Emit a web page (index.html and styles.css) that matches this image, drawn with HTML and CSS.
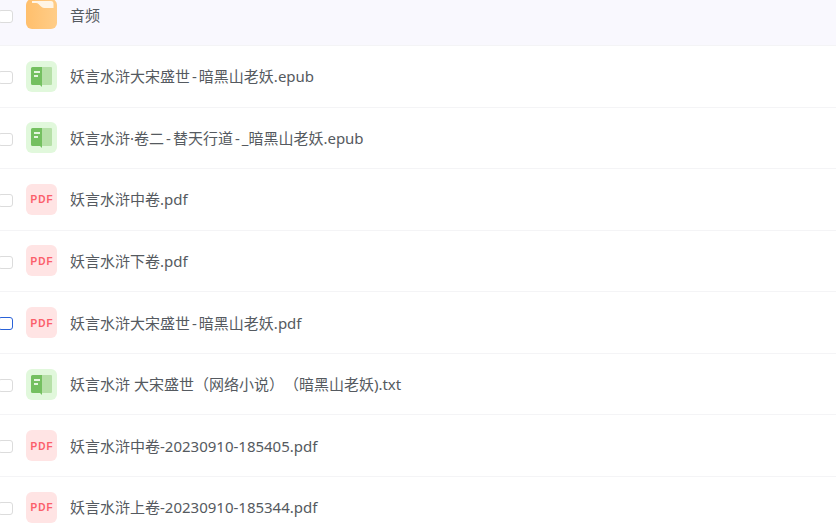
FILE: index.html
```html
<!DOCTYPE html>
<html lang="zh-CN">
<head>
    <meta charset="UTF-8">
    <meta name="viewport" content="width=device-width, initial-scale=1.0">
    <title>文件列表</title>
    <link rel="stylesheet" href="styles.css">
</head>
<body>
    <svg class="sprites" width="0" height="0">
        <defs>
            <linearGradient id="folder-fill" x1="0" y1="0" x2="1" y2="0">
                <stop offset="0" stop-color="#ffbf6c"/>
                <stop offset="1" stop-color="#ffcd88"/>
            </linearGradient>
        </defs>
        <symbol id="icon-folder" viewBox="0 0 31 31">
            <rect x="0" y="0" width="31" height="30" rx="6" fill="url(#folder-fill)"/>
            <path d="M6 2H25Q27.500 2 27.500 5V9H18.500Q17 9 15 7.500L12.500 5Q11.500 4 10 4H6Z" fill="#fff5e6"/>
        </symbol>
        <symbol id="icon-book" viewBox="0 0 31 31">
            <rect width="31" height="31" rx="6" fill="#e1f8dc"/>
            <path d="M16 6H25Q26 6 26 7V23Q26 24 25 24H16Z" fill="#b6e0a8"/>
            <path d="M6.500 6H16V26L14 24H6.500Q5 24 5 22.500V7.500Q5 6 6.500 6Z" fill="#74c060"/>
            <rect x="8" y="10" width="6" height="2" fill="#e6f6e0"/>
            <rect x="8" y="14" width="4" height="2" fill="#e6f6e0"/>
        </symbol>
    </svg>

    <ul class="file-list">
        <li class="file-row selected-row">
            <span class="check"></span>
            <svg class="file-icon"><use href="#icon-folder"/></svg>
            <span class="file-name">音频</span>
        </li>
        <li class="file-row">
            <span class="check"></span>
            <svg class="file-icon"><use href="#icon-book"/></svg>
            <span class="file-name">妖言水浒大宋盛世<span class="dash">-</span>暗黑山老妖.epub</span>
        </li>
        <li class="file-row">
            <span class="check"></span>
            <svg class="file-icon"><use href="#icon-book"/></svg>
            <span class="file-name">妖言水浒·卷二<span class="dash">-</span>替天行道<span class="dash">-</span>_暗黑山老妖.epub</span>
        </li>
        <li class="file-row">
            <span class="check"></span>
            <span class="pdf-icon">PDF</span>
            <span class="file-name">妖言水浒中卷.pdf</span>
        </li>
        <li class="file-row">
            <span class="check"></span>
            <span class="pdf-icon">PDF</span>
            <span class="file-name">妖言水浒下卷.pdf</span>
        </li>
        <li class="file-row">
            <span class="check check-active"></span>
            <span class="pdf-icon">PDF</span>
            <span class="file-name">妖言水浒大宋盛世<span class="dash">-</span>暗黑山老妖.pdf</span>
        </li>
        <li class="file-row">
            <span class="check"></span>
            <svg class="file-icon"><use href="#icon-book"/></svg>
            <span class="file-name">妖言水浒 大宋盛世（网络小说）（暗黑山老妖).txt</span>
        </li>
        <li class="file-row">
            <span class="check"></span>
            <span class="pdf-icon">PDF</span>
            <span class="file-name">妖言水浒中卷-20230910-185405.pdf</span>
        </li>
        <li class="file-row">
            <span class="check"></span>
            <span class="pdf-icon">PDF</span>
            <span class="file-name">妖言水浒上卷-20230910-185344.pdf</span>
        </li>
    </ul>
</body>
</html>
```

FILE: styles.css
```css
html, body {
    height: 100%;
    overflow: hidden;
}
body {
    margin: 0;
    background-color: #fff;
    font-family: "Noto Sans", "Noto Sans CJK SC", sans-serif;
}
.sprites {
    display: block;
    height: 0;
}
.file-list {
    list-style: none;
    margin: -15.5px 0 0;
    padding: 0;
}
.file-row {
    display: flex;
    align-items: center;
    box-sizing: border-box;
    height: 61.56px;
    padding-left: 26px;
    border-bottom: 1px solid #f4f4f6;
    position: relative;
}
.selected-row {
    background-color: #f9f8fe;
}
.check {
    position: absolute;
    left: -2px;
    top: 25px;
    box-sizing: border-box;
    width: 15px;
    height: 13px;
    border: 1px solid #dcdcdc;
    border-radius: 3px;
    background-color: #fff;
}
.check-active {
    border-color: #2a62d8;
}
.file-icon {
    width: 31px;
    height: 31px;
    flex: none;
}
.pdf-icon {
    display: flex;
    align-items: center;
    justify-content: center;
    width: 31px;
    height: 31px;
    flex: none;
    box-sizing: border-box;
    padding: 1px 0 0 1px;
    border-radius: 6px;
    background-color: #ffe4e4;
    color: #fb5f6b;
    font-family: "Liberation Sans", sans-serif;
    font-size: 10px;
    font-weight: bold;
    letter-spacing: 1px;
}
.file-name {
    margin-left: 13px;
    font-size: 15px;
    line-height: 20px;
    color: #555a60;
    text-spacing-trim: space-all;
}
.dash {
    padding: 0 2px;
}
```
